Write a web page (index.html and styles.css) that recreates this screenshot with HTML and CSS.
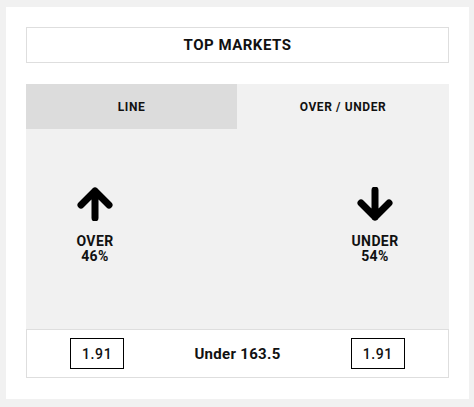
FILE: index.html
```html
<!DOCTYPE html>
<html>
<head>
<meta charset="utf-8">
<link rel="stylesheet" href="styles.css">
</head>
<body>
<div class="card">
  <div class="title">TOP MARKETS</div>
  <div class="tabs">
    <div class="tab active">LINE</div>
    <div class="tab">OVER / UNDER</div>
  </div>
  <div class="panel">
    <div class="side">
      <svg class="arrow" viewBox="0 0 36 34" width="36" height="34"><path d="M18 31V4M4 18L18 4L32 18" fill="none" stroke="#000" stroke-width="7" stroke-linecap="round" stroke-linejoin="round"/></svg>
      <div class="label">OVER<br>46%</div>
    </div>
    <div></div>
    <div class="side">
      <svg class="arrow" viewBox="0 0 36 34" width="36" height="34"><path d="M18 3V30M4 16L18 30L32 16" fill="none" stroke="#000" stroke-width="7" stroke-linecap="round" stroke-linejoin="round"/></svg>
      <div class="label">UNDER<br>54%</div>
    </div>
  </div>
  <div class="odds-row">
    <div class="cell"><span class="odd">1.91</span></div>
    <div class="cell line">Under 163.5</div>
    <div class="cell"><span class="odd">1.91</span></div>
  </div>
</div>
</body>
</html>
```
FILE: styles.css
```css
html, body {
  margin: 0;
  padding: 0;
  background: #f1f1f1;
}
body {
  padding: 7px 5px 8px 6px;
  font-family: Roboto, "Liberation Sans", sans-serif;
  color: #111;
}
.card {
  width: 463px;
  height: 392px;
  box-sizing: border-box;
  background: #fff;
  padding: 20px 20px 0 20px;
}
.title {
  height: 36px;
  box-sizing: border-box;
  border: 1px solid #dedede;
  display: flex;
  align-items: center;
  justify-content: center;
  font-size: 15px;
  font-weight: 700;
  letter-spacing: 0.5px;
}
.tabs {
  margin-top: 21px;
  display: grid;
  grid-template-columns: 211px 1fr;
  height: 45px;
  background: #f1f1f1;
}
.tab {
  display: flex;
  align-items: center;
  justify-content: center;
  font-size: 12px;
  font-weight: 700;
  letter-spacing: 0.6px;
}
.tab.active {
  background: #dcdcdc;
}
.panel {
  height: 200px;
  box-sizing: border-box;
  padding-top: 58px;
  background: #f1f1f1;
  display: grid;
  grid-template-columns: 138px 1fr 148px;
  align-items: start;
}
.side {
  display: flex;
  flex-direction: column;
  align-items: center;
}
.arrow {
  display: block;
}
.label {
  margin-top: 13px;
  text-align: center;
  font-size: 14px;
  font-weight: 700;
  line-height: 15px;
  letter-spacing: 0.4px;
}
.odds-row {
  height: 49px;
  box-sizing: border-box;
  border: 1px solid #dedede;
  display: grid;
  grid-template-columns: 1fr 1fr 1fr;
  align-items: center;
}
.cell {
  display: flex;
  justify-content: center;
  align-items: center;
}
.odd {
  width: 54px;
  height: 31px;
  box-sizing: border-box;
  border: 1px solid #000;
  display: flex;
  align-items: center;
  justify-content: center;
  font-size: 14px;
  font-weight: 500;
  letter-spacing: 0.6px;
}
.line {
  font-size: 15px;
  font-weight: 700;
  letter-spacing: 0.3px;
}
```
